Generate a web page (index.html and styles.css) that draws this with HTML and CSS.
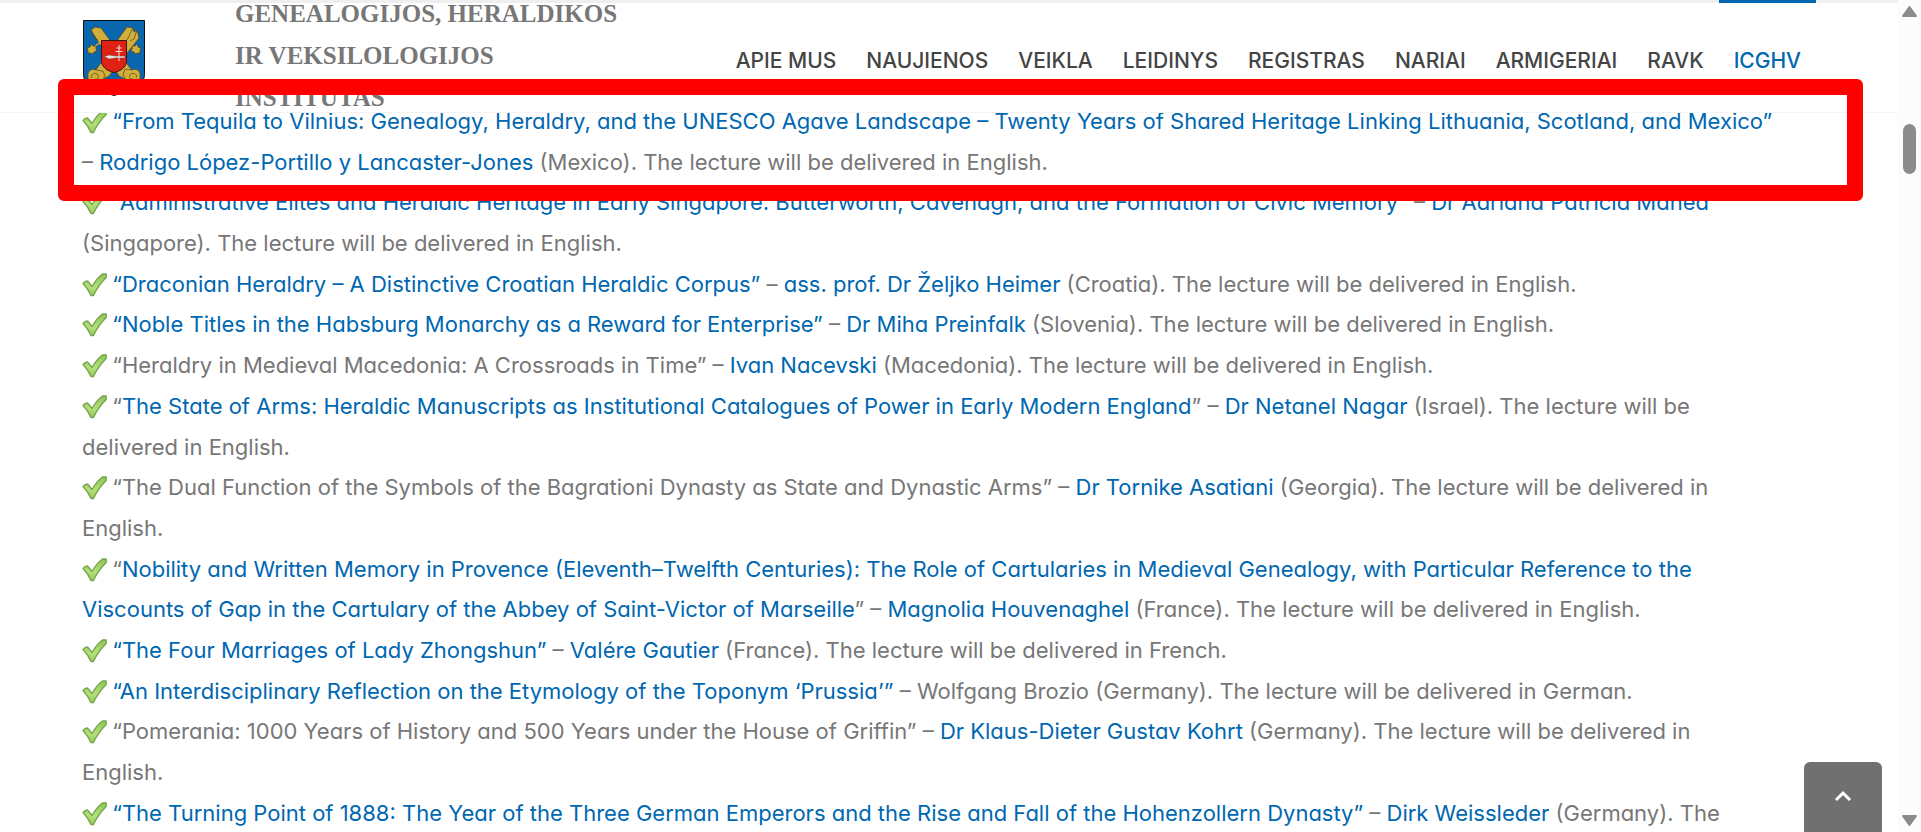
FILE: index.html
```html
<!DOCTYPE html>
<html lang="lt">
<head>
    <meta charset="UTF-8">
    <meta name="viewport" content="width=device-width, initial-scale=1.0">
    <title>Genealogijos, heraldikos ir veksilologijos institutas</title>
    <link rel="stylesheet" href="styles.css">
</head>
<body>
    <!-- shared icons -->
    <svg class="defs" width="0" height="0" aria-hidden="true">
        <linearGradient id="leaf" x1="0" y1="0" x2="0" y2="1">
            <stop offset="0" stop-color="#8cc653"/>
            <stop offset=".6" stop-color="#b5e07a"/>
            <stop offset="1" stop-color="#93c95c"/>
        </linearGradient>
        <symbol id="check" viewBox="0 0 25 25">
            <path d="M1 11.500Q3 9 5.500 9L10 14.500Q15 6 20.500 2L24.200 2 24.200 5.500Q16 13.500 11.500 23.500L9 23.500Q6 16.500 1 11.500Z" fill="url(#leaf)" stroke="#75a34c" stroke-width="1.300" stroke-linejoin="round"/>
        </symbol>
    </svg>

    <div class="page">
        <header class="header">
            <a class="brand" href="#">
                <svg class="logo" viewBox="0 0 62 76" role="img" aria-label="Herbas">
                    <path d="M.5.5h61v53c0 12-8 15-18 18-6 2-9 3-12.500 4-3.500-1-6.500-2-12.500-4-10-3-18-6-18-18z" fill="#0a66ad" stroke="#111"/>
                    <g fill="#d2ae3a" stroke="#4e431c" stroke-width=".7">
                        <path d="M8 10l4-3 6 1 32 44-6 8-8-4z"/>
                        <path d="M54 10l-3 2-1-4-6-1-32 44 6 9 8-4 30-38z"/>
                        <path d="M8 10l4 9 3 1M54 10l-3 9-4 2M50 8l-6 12" fill="none"/>
                        <path d="M5 56c-1-5 4-8 8-6l7 1 2 5-5 8H8c-3-2-3-5-3-8z"/>
                        <path d="M57 56c1-5-4-8-8-6l-7-1-2 6 5 8h9c3-2 3-4 3-7z"/>
                        <path d="M9 58c-2-3 2-6 5-4s1 6-2 5M53 58c2-3-2-6-5-4s-1 6 2 5" fill="none"/>
                        <path d="M18 22l-6 4M44 22l6 4" stroke="#d2ae3a" stroke-width="1.500"/>
                        <path d="M8 24l2 2h3v3l1 2-3 1-1 2-3-1H5v-3l-1-2 3-1zM54 24l-2 2h-3v3l-1 2 3 1 1 2 3-1h2v-3l1-2-3-1z"/>
                    </g>
                    <path d="M18.500 20.500h25v20c0 7-6 10.500-12.500 12-6.500-1.500-12.500-5-12.500-12z" fill="#df2114" stroke="#3c1616"/>
                    <path d="M21 36.500l5-1.500 7 1h9v2h-9l-7 1z" fill="#e8e4dc" stroke="#743030" stroke-width=".5"/>
                    <path d="M36 25v16M33.500 28h5M32.500 31.500h7" stroke="#e8e4dc" stroke-width="1"/>
                </svg>
                <span class="brand-name">GENEALOGIJOS, HERALDIKOS<br>IR VEKSILOLOGIJOS<br>INSTITUTAS</span>
            </a>
            <nav>
                <ul class="nav-links">
                    <li><a href="#">APIE MUS</a></li>
                    <li><a href="#">NAUJIENOS</a></li>
                    <li><a href="#">VEIKLA</a></li>
                    <li><a href="#">LEIDINYS</a></li>
                    <li><a href="#">REGISTRAS</a></li>
                    <li><a href="#">NARIAI</a></li>
                    <li><a href="#">ARMIGERIAI</a></li>
                    <li><a href="#">RAVK</a></li>
                    <li><a class="active" href="#">ICGHV</a></li>
                </ul>
            </nav>
        </header>

        <main class="content">
            <ul class="lectures">
                <li><svg class="check"><use href="#check"/></svg> <a href="#">“From Tequila to Vilnius: Genealogy, Heraldry, and the UNESCO Agave Landscape – Twenty Years of Shared Heritage Linking Lithuania, Scotland, and Mexico”</a><br>– <a href="#">Rodrigo López-Portillo y Lancaster-Jones</a> (Mexico). The lecture will be delivered in English.</li>
                <li><svg class="check"><use href="#check"/></svg> “<a href="#">Administrative Elites and Heraldic Heritage in Early Singapore: Butterworth, Cavenagh, and the Formation of Civic Memory”</a> – <a href="#">Dr Adriana Patricia Maned</a> (Singapore). The lecture will be delivered in English.</li>
                <li><svg class="check"><use href="#check"/></svg> <a href="#">“Draconian Heraldry – A Distinctive Croatian Heraldic Corpus”</a> – <a href="#">ass. prof. Dr Željko Heimer</a> (Croatia). The lecture will be delivered in English.</li>
                <li><svg class="check"><use href="#check"/></svg> <a href="#">“Noble Titles in the Habsburg Monarchy as a Reward for Enterprise”</a> – <a href="#">Dr Miha Preinfalk</a> (Slovenia). The lecture will be delivered in English.</li>
                <li><svg class="check"><use href="#check"/></svg> “Heraldry in Medieval Macedonia: A Crossroads in Time” – <a href="#">Ivan Nacevski</a> (Macedonia). The lecture will be delivered in English.</li>
                <li><svg class="check"><use href="#check"/></svg> “<a href="#">The State of Arms: Heraldic Manuscripts as Institutional Catalogues of Power in Early Modern England</a>” – <a href="#">Dr Netanel Nagar</a> (Israel). The lecture will be<br>delivered in English.</li>
                <li><svg class="check"><use href="#check"/></svg> “The Dual Function of the Symbols of the Bagrationi Dynasty as State and Dynastic Arms” – <a href="#">Dr Tornike Asatiani</a> (Georgia). The lecture will be delivered in<br>English.</li>
                <li><svg class="check"><use href="#check"/></svg> “<a href="#">Nobility and Written Memory in Provence (Eleventh–Twelfth Centuries): The Role of Cartularies in Medieval Genealogy, with Particular Reference to the<br>Viscounts of Gap in the Cartulary of the Abbey of Saint-Victor of Marseille</a>” – <a href="#">Magnolia Houvenaghel</a> (France). The lecture will be delivered in English.</li>
                <li><svg class="check"><use href="#check"/></svg> <a href="#">“The Four Marriages of Lady Zhongshun”</a> – <a href="#">Valére Gautier</a> (France). The lecture will be delivered in French.</li>
                <li><svg class="check"><use href="#check"/></svg> <a href="#">“An Interdisciplinary Reflection on the Etymology of the Toponym ‘Prussia’”</a> – Wolfgang Brozio (Germany). The lecture will be delivered in German.</li>
                <li><svg class="check"><use href="#check"/></svg> “Pomerania: 1000 Years of History and 500 Years under the House of Griffin” – <a href="#">Dr Klaus-Dieter Gustav Kohrt</a> (Germany). The lecture will be delivered in<br>English.</li>
                <li><svg class="check"><use href="#check"/></svg> <a href="#">“The Turning Point of 1888: The Year of the Three German Emperors and the Rise and Fall of the Hohenzollern Dynasty”</a> – <a href="#">Dirk Weissleder</a> (Germany). The</li>
            </ul>
        </main>

        <div class="highlight"></div>
        <button class="to-top" type="button" aria-label="Back to top">
            <svg width="18" height="12" viewBox="0 0 18 12"><path d="M2 10l7-7 7 7" fill="none" stroke="#fff" stroke-width="3"/></svg>
        </button>
    </div>

    <div class="scrollbar">
        <svg width="15" height="11" viewBox="0 0 15 11"><path d="M7.500 1 14 10H1z" fill="#8b8b8b" stroke="#8b8b8b" stroke-linejoin="round" stroke-width="2"/></svg>
        <div class="thumb"></div>
        <svg width="15" height="11" viewBox="0 0 15 11"><path d="M7.500 10 14 1H1z" fill="#8b8b8b" stroke="#8b8b8b" stroke-linejoin="round" stroke-width="2"/></svg>
    </div>
</body>
</html>
```

FILE: styles.css
```css
* {
    box-sizing: border-box;
}

body {
    display: flex;
    height: 100vh;
    margin: 0;
    overflow: hidden;
    font-family: Inter, "Open Sans", sans-serif;
    font-feature-settings: "cv11";
    font-size: 22px;
    line-height: 1.85;
    color: #777;
    background: #fff;
}

a {
    color: #0067b1;
    text-decoration: none;
}

.defs {
    position: absolute;
}

.page {
    position: relative;
    flex: 1;
    min-width: 0;
    overflow: hidden;
}

.header {
    position: relative;
    z-index: 1;
    display: flex;
    justify-content: space-between;
    height: 113px;
    padding: 0 82px;
    border-top: 3px solid #efefef;
    border-bottom: 1px solid #f3f3f3;
    background: #fff;
}

.brand {
    display: flex;
    align-items: center;
    gap: 90px;
    padding-left: 1px;
    color: #777;
}

.logo {
    width: 62px;
    height: 76px;
}

.brand-name {
    padding-bottom: 4px;
    font-family: "Liberation Serif", serif;
    font-size: 25px;
    font-weight: bold;
    line-height: 42px;
}

.nav-links {
    display: flex;
    margin: -3px 0 0;
    padding: 0;
    list-style: none;
}

.nav-links a {
    display: block;
    padding: 0 15px;
    border-top: 3px solid transparent;
    font-size: 21px;
    font-weight: 500;
    line-height: 116px;
    color: #444;
}

.nav-links .active {
    border-color: #0067b1;
    color: #0067b1;
}

.content {
    margin-top: -12px;
    padding: 0 82px;
}

.lectures {
    margin: 0;
    padding: 0;
    list-style: none;
}

.check {
    width: 25px;
    height: 25px;
    margin-right: -1px;
    vertical-align: -5px;
}

/* frame round the first lecture */
.highlight {
    position: absolute;
    z-index: 2;
    top: 79px;
    right: 35px;
    left: 58px;
    height: 122px;
    border: 16px solid #f00;
    border-radius: 6px;
}

.to-top {
    position: absolute;
    right: 16px;
    bottom: 0;
    width: 78px;
    height: 70px;
    padding: 0;
    border: 0;
    border-radius: 6px 6px 0 0;
    background: #707070;
}

.scrollbar {
    display: flex;
    flex-direction: column;
    align-items: center;
    width: 23px;
    padding: 6px 0;
    background: #fcfcfc;
}

.thumb {
    width: 13px;
    height: 50px;
    margin: 107px 0 auto;
    border-radius: 7px;
    background: #8b8b8b;
}
```
